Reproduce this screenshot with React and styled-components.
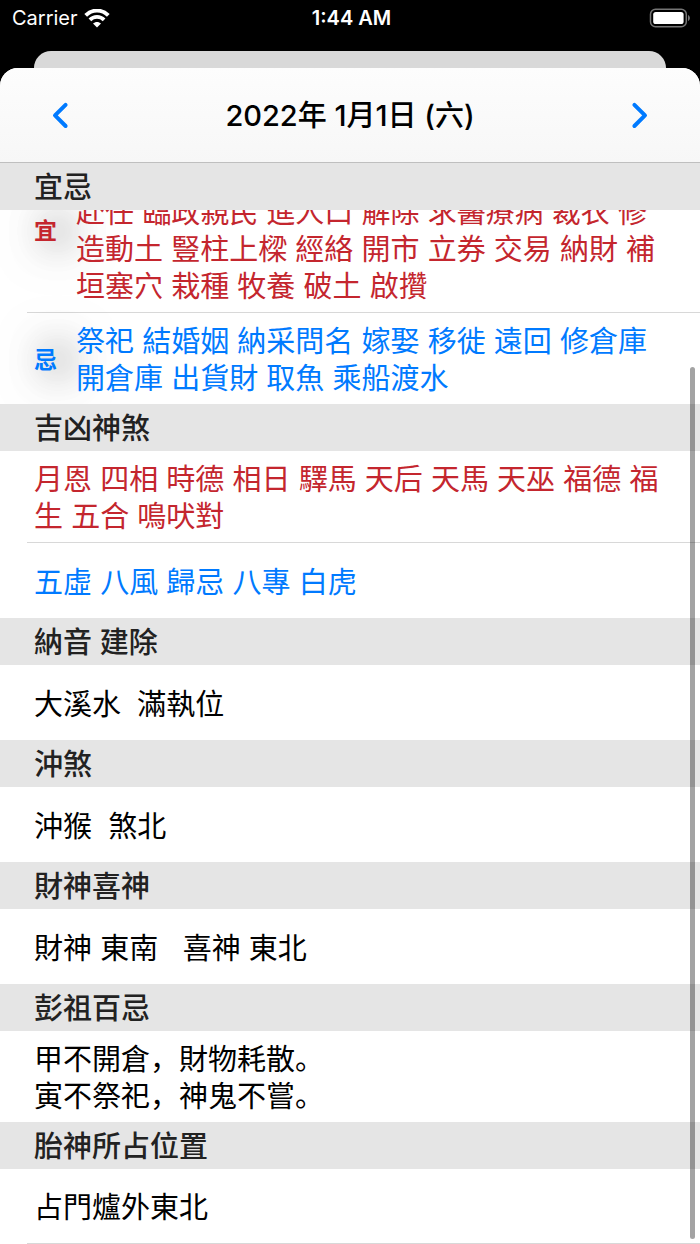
import React from 'react'
import styled, { createGlobalStyle } from 'styled-components'

const RED = '#c4262e'
const BLUE = '#007aff'

const sections = [
  {
    title: '宜忌',
    rows: [
      {
        label: '宜',
        color: RED,
        scrolled: true,
        text: '赴任 臨政親民 進人口 解除 求醫療病 裁衣 修造動土 豎柱上樑 經絡 開市 立券 交易 納財 補垣塞穴 栽種 牧養 破土 啟攢',
      },
      {
        label: '忌',
        color: BLUE,
        text: '祭祀 結婚姻 納采問名 嫁娶 移徙 遠回 修倉庫 開倉庫 出貨財 取魚 乘船渡水',
      },
    ],
  },
  {
    title: '吉凶神煞',
    rows: [
      { color: RED, text: '月恩 四相 時德 相日 驛馬 天后 天馬 天巫 福德 福生 五合 鳴吠對' },
      { color: BLUE, text: '五虛 八風 歸忌 八專 白虎' },
    ],
  },
  { title: '納音 建除', rows: [{ text: '大溪水  滿執位' }] },
  { title: '沖煞', rows: [{ text: '沖猴  煞北' }] },
  { title: '財神喜神', rows: [{ text: '財神 東南   喜神 東北' }] },
  { title: '彭祖百忌', rows: [{ text: '甲不開倉，財物耗散。\n寅不祭祀，神鬼不嘗。' }] },
  { title: '胎神所占位置', rows: [{ text: '占門爐外東北', last: true }] },
]

const WifiIcon = () => (
  <svg width="26" height="19" viewBox="0 0 26 19" fill="none" stroke="#fff" strokeWidth="3.8" aria-hidden="true">
    <path d="M1.700 6.400C8-.1 18-.1 24.300 6.400" />
    <path d="M5.900 10.900c4-4 10.200-4 14.200 0" />
    <path d="M13 18.600l-4-4.100c2.200-2.100 5.800-2.100 8 0z" fill="#fff" stroke="none" />
  </svg>
)

const BatteryIcon = () => (
  <svg width="42" height="20" viewBox="0 0 42 20" aria-hidden="true">
    <rect x="1.500" y="1.200" width="35.800" height="17.600" rx="5" fill="none" stroke="#757575" strokeWidth="1.500" />
    <rect x="4.200" y="3.900" width="30.400" height="12.200" rx="2.600" fill="#fff" />
    <path d="M39 7v6c1.200-.5 1.900-1.600 1.900-3S40.200 7.500 39 7z" fill="#757575" />
  </svg>
)

const Chevron = ({ d }) => (
  <svg width="18" height="28" viewBox="0 0 18 28" fill="none" stroke={BLUE} strokeWidth="4" strokeLinecap="round" strokeLinejoin="round" aria-hidden="true">
    <path d={d} />
  </svg>
)

const App = () => {
  return (
    <Screen>
      <GlobalStyle />
      <StatusBar>
        <Carrier>
          Carrier <WifiIcon />
        </Carrier>
        <Time>1:44 AM</Time>
        <Battery>
          <BatteryIcon />
        </Battery>
      </StatusBar>
      <BackCard />
      <Sheet>
        <Nav>
          <NavButton type="button" aria-label="前一天">
            <Chevron d="M14.600 3.800L4 14.400L14.600 25" />
          </NavButton>
          <Title>2022年 1月1日 (六)</Title>
          <NavButton type="button" aria-label="後一天">
            <Chevron d="M3.400 3.800L14 14.400L3.400 25" />
          </NavButton>
        </Nav>
        <List>
          {sections.map((section) => (
            <section key={section.title}>
              <SectionTitle>{section.title}</SectionTitle>
              {section.rows.map((row, i) => (
                <Row
                  key={row.text}
                  $color={row.color}
                  $scrolled={row.scrolled}
                  $line={row.last || i < section.rows.length - 1}
                >
                  {row.label && <Label $scrolled={row.scrolled}>{row.label}</Label>}
                  <Text>{row.text}</Text>
                </Row>
              ))}
            </section>
          ))}
        </List>
        <ScrollThumb />
      </Sheet>
    </Screen>
  )
}

const GlobalStyle = createGlobalStyle`
*{
  box-sizing: border-box;
}
body{
  margin: 0;
  background: #000;
  font-family: Inter, "Noto Sans CJK SC", "Noto Sans CJK TC", sans-serif;
}
`

const Screen = styled.div`
min-height: 100vh;
display: flex;
flex-direction: column;
`

const StatusBar = styled.header`
display: grid;
grid-template-columns: 1fr auto 1fr;
align-items: center;
height: 51px;
padding: 0 9px 15px 12px;
color: #fff;
font-size: 20px;
line-height: 24px;
`

const Carrier = styled.div`
display: flex;
align-items: center;
gap: 6px;
`

const Time = styled.div`
font-weight: 600;
`

const Battery = styled.div`
display: flex;
justify-content: flex-end;
`

const BackCard = styled.div`
height: 17px;
margin: 0 34px;
border-radius: 17px 17px 0 0;
background: #d9d9d9;
`

const Sheet = styled.main`
position: relative;
flex: 1;
border-radius: 18px 18px 0 0;
background: #fff;
overflow: hidden;
`

const Nav = styled.nav`
display: flex;
align-items: center;
justify-content: space-between;
height: 95px;
padding: 0 40px;
border-bottom: 1px solid #bfbfbf;
background: linear-gradient(#fdfdfd, #f7f7f7);
`

const NavButton = styled.button`
display: flex;
align-items: center;
justify-content: center;
width: 40px;
height: 48px;
padding: 0;
border: 0;
background: none;
cursor: pointer;
`

const Title = styled.h1`
margin: 0;
font-size: 29px;
line-height: 37px;
font-weight: 500;
color: #000;
`

const List = styled.div`
overflow: hidden;
`

const SectionTitle = styled.h2`
position: relative;
z-index: 1;
margin: 0;
padding: 6px 34px 4px;
background: #e5e5e5;
color: #222;
font-size: 29px;
line-height: 37px;
font-weight: 500;
`

const Row = styled.div`
position: relative;
display: flex;
align-items: center;
min-height: 75px;
margin-top: ${(p) => (p.$scrolled ? '-26px' : '0')};
margin-left: 27px;
padding: 10px 34px 7px 7px;
border-bottom: ${(p) => (p.$line ? '1px solid #d8d8d8' : '0')};
color: ${(p) => p.$color || '#000'};
`

const Label = styled.span`
flex: none;
width: 42px;
padding-bottom: ${(p) => (p.$scrolled ? '37px' : '0')};
font-size: 23px;
line-height: 37px;
font-weight: 600;
text-shadow: 12px 0 36px rgba(0, 0, 0, 0.6), 12px 0 52px rgba(0, 0, 0, 0.6);
`

const Text = styled.p`
margin: 0;
font-size: 29px;
line-height: 37px;
white-space: pre-wrap;
`

const ScrollThumb = styled.div`
position: absolute;
top: 299px;
right: 5px;
bottom: 5px;
width: 5px;
border-radius: 3px;
background: rgba(0, 0, 0, 0.36);
z-index: 2;
`

export default App
